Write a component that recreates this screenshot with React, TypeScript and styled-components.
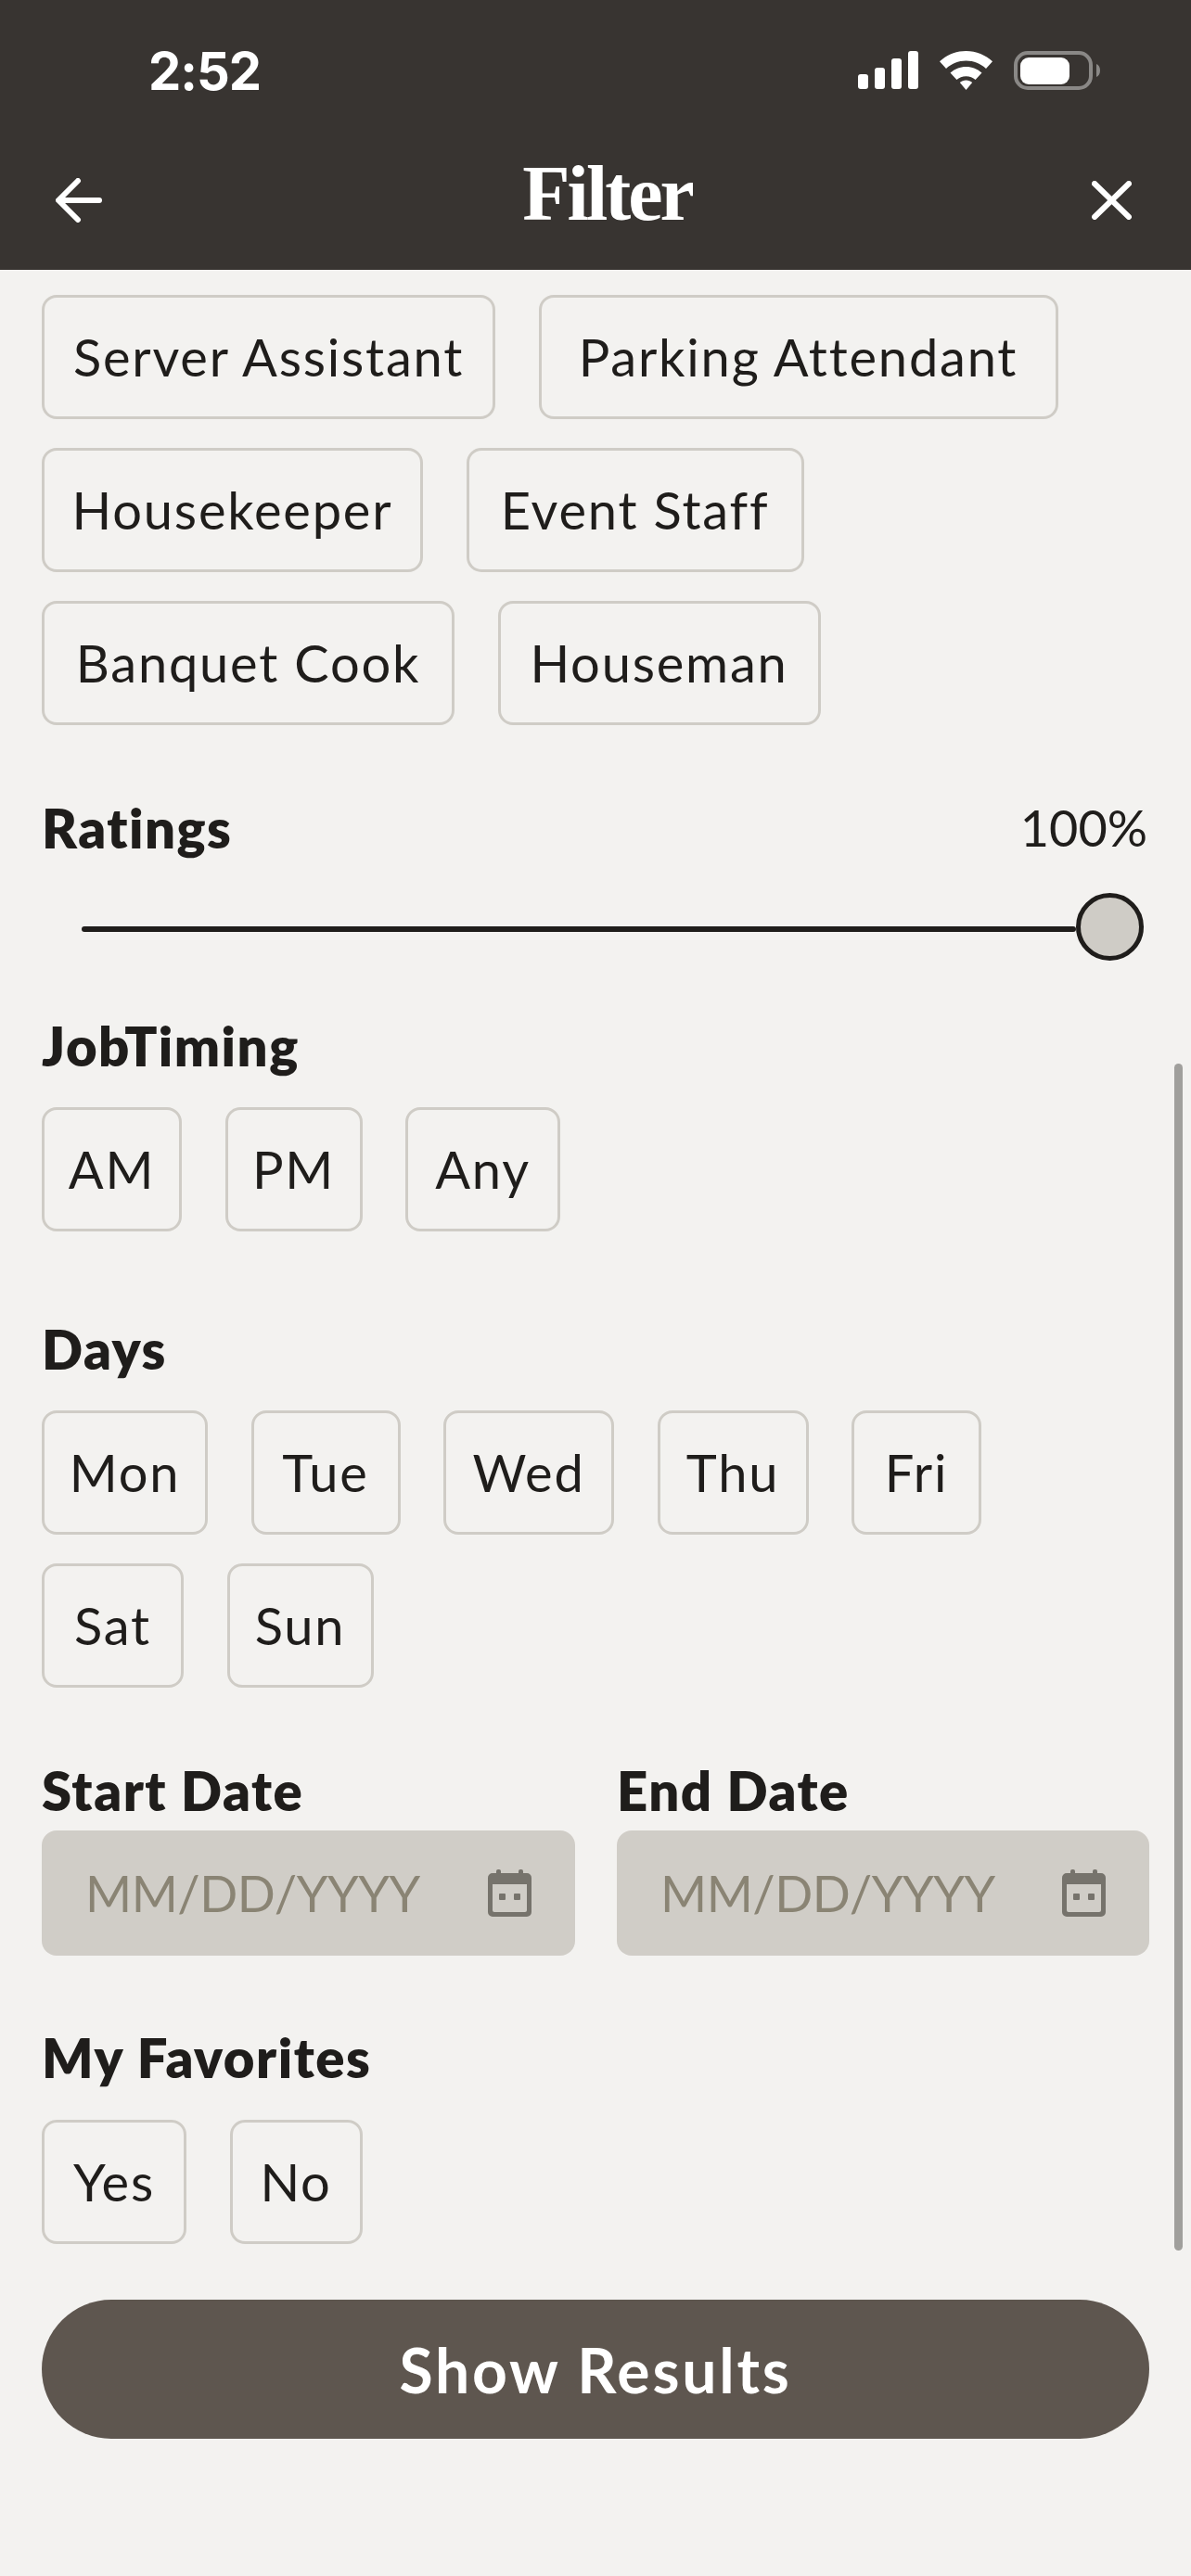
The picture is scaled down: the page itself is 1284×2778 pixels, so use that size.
import React from 'react';
import styled, { createGlobalStyle } from 'styled-components';

const GlobalStyle = createGlobalStyle`
  html, body {
    margin: 0;
    padding: 0;
    background: #f3f2f0;
  }
  * {
    box-sizing: border-box;
  }
`;

const Page = styled.div`
  position: relative;
  width: 1284px;
  height: 2778px;
  overflow: hidden;
  background: #f3f2f0;
  color: #1f1d1b;
  font-family: 'Lato', 'Noto Sans', sans-serif;
`;

const Header = styled.header`
  height: 291px;
  background: #383431;
  color: #fff;
`;

const StatusBar = styled.div`
  display: flex;
  align-items: center;
  justify-content: space-between;
  height: 151px;
  padding: 0 98px 0 160px;
`;

const Clock = styled.span`
  font-family: 'Inter', sans-serif;
  font-size: 56px;
  font-weight: 700;
  letter-spacing: -1px;
  line-height: 1;
  margin-top: 3px;
`;

const StatusIcons = styled.div`
  display: flex;
  align-items: center;
  gap: 23px;
`;

const NavBar = styled.div`
  display: flex;
  align-items: center;
  justify-content: space-between;
  height: 130px;
  padding: 0 64px 0 60px;
`;

const NavButton = styled.button`
  display: flex;
  padding: 0;
  border: 0;
  background: none;
  color: #fff;
`;

const Title = styled.h1`
  margin: 0 0 14px 22px;
  font-family: 'Liberation Serif', serif;
  font-size: 84px;
  font-weight: 700;
  letter-spacing: -3px;
  line-height: 76px;
`;

const Body = styled.main`
  padding: 27px 45px 0;
`;

const ChipGroup = styled.div`
  display: flex;
  flex-wrap: wrap;
  gap: 31px 46.5px;
`;

const Chip = styled.button<{ $width: number }>`
  width: ${(p) => p.$width}px;
  height: 134px;
  padding: 0;
  border: 3px solid #cfccc6;
  border-radius: 16px;
  background: transparent;
  color: #1f1d1b;
  font-family: inherit;
  font-size: 56px;
  letter-spacing: 1.8px;
  line-height: 1;
  white-space: nowrap;
`;

const Section = styled.section<{ $top: number }>`
  margin-top: ${(p) => p.$top}px;
`;

const LabelRow = styled.div`
  display: flex;
  align-items: center;
  justify-content: space-between;
`;

const Label = styled.h2<{ $gap?: number }>`
  margin: 0 0 ${(p) => p.$gap ?? 36}px;
  font-size: 58px;
  font-weight: 800;
  letter-spacing: 1.5px;
  line-height: 60px;
`;

const RatingValue = styled.span`
  font-size: 54px;
  line-height: 60px;
  margin: 0 2px 36px 0;
`;

const SliderRow = styled.div`
  display: flex;
  align-items: center;
  margin-top: 4px;
  padding: 0 6px 0 43px;
`;

const SliderTrack = styled.div`
  flex: 1;
  height: 6px;
  margin-top: 5px;
  border-radius: 3px;
  background: #1f1d1b;
`;

const SliderThumb = styled.div`
  width: 73px;
  height: 73px;
  border: 5px solid #1f1d1b;
  border-radius: 50%;
  background: #cfccc6;
`;

const DateRow = styled.div`
  display: grid;
  grid-template-columns: 575px 574px;
  column-gap: 45px;
`;

const DateField = styled.div`
  display: flex;
  align-items: center;
  justify-content: space-between;
  height: 135px;
  padding: 0 47px 0 47px;
  border-radius: 16px;
  background: #d0cdc7;
  color: #8a8474;
  font-size: 54px;
  letter-spacing: -0.5px;
`;

const ShowResults = styled.button`
  display: block;
  width: 100%;
  height: 150px;
  margin-top: 60px;
  border: 0;
  border-radius: 75px;
  background: #5e564f;
  color: #fff;
  font-family: inherit;
  font-size: 66px;
  font-weight: 700;
  letter-spacing: 2.8px;
`;

const ScrollThumb = styled.div`
  position: absolute;
  top: 1147px;
  right: 9px;
  width: 9px;
  height: 1280px;
  border-radius: 5px;
  background: #a09f9c;
`;

function SignalIcon() {
  return (
    <svg width="65" height="41" viewBox="0 0 65 41" fill="#fff">
      <rect x="0" y="25" width="11" height="16" rx="3" />
      <rect x="18" y="18" width="11" height="23" rx="3" />
      <rect x="36" y="8" width="11" height="33" rx="3" />
      <rect x="54" y="0" width="11" height="41" rx="3" />
    </svg>
  );
}

function WifiIcon() {
  return (
    <svg width="57" height="42" viewBox="0 0 57 42" fill="#fff">
      <path d="M28.5 0C39.5 0 49.5 4.3 57 11.3L50 19C44.4 13.8 36.8 10.6 28.5 10.6S12.6 13.8 7 19L0 11.3C7.5 4.3 17.5 0 28.5 0Z" />
      <path d="M28.5 17C35 17 41 19.5 45.5 23.6L38.6 31C36 28.6 32.4 27.2 28.5 27.2S21 28.6 18.4 31L11.5 23.6C16 19.5 22 17 28.5 17Z" />
      <path d="M28.5 31.5C31 31.5 33.4 32.4 35.2 34L28.5 42L21.8 34C23.6 32.4 26 31.5 28.5 31.5Z" />
    </svg>
  );
}

function BatteryIcon() {
  return (
    <svg width="93" height="42" viewBox="0 0 93 42">
      <rect x="2" y="2" width="81" height="38" rx="13" fill="none" stroke="#8a8886" strokeWidth="4" />
      <rect x="7" y="7" width="53" height="29" rx="9" fill="#fff" />
      <path d="M89 14C91.5 15 93 17.5 93 21S91.5 27 89 28Z" fill="#8a8886" />
    </svg>
  );
}

function BackIcon() {
  return (
    <svg width="50" height="48" viewBox="0 0 50 48" fill="none" stroke="#fff" strokeWidth="6" strokeLinecap="round" strokeLinejoin="round">
      <path d="M47 24H5" />
      <path d="M24 3L3 24l21 21" />
    </svg>
  );
}

function CloseIcon() {
  return (
    <svg width="43" height="42" viewBox="0 0 43 42" fill="none" stroke="#fff" strokeWidth="6" strokeLinecap="round">
      <path d="M3 3l37 36" />
      <path d="M40 3L3 39" />
    </svg>
  );
}

function CalendarIcon() {
  return (
    <svg width="47" height="51" viewBox="0 0 47 51" fill="#76736c">
      <rect x="9" y="0" width="5" height="8" rx="2" />
      <rect x="33" y="0" width="5" height="8" rx="2" />
      <path d="M5 4H42a5 5 0 0 1 5 5V46a5 5 0 0 1-5 5H5a5 5 0 0 1-5-5V9a5 5 0 0 1 5-5ZM5 16V44a2 2 0 0 0 2 2H40a2 2 0 0 0 2-2V16Z" fillRule="evenodd" />
      <rect x="12" y="26" width="7" height="7" rx="1" />
      <rect x="28" y="26" width="7" height="7" rx="1" />
    </svg>
  );
}

const roles: [string, number][] = [
  ['Server Assistant', 489],
  ['Parking Attendant', 560],
  ['Housekeeper', 411],
  ['Event Staff', 364],
  ['Banquet Cook', 445],
  ['Houseman', 348],
];
const timings: [string, number][] = [
  ['AM', 151],
  ['PM', 148],
  ['Any', 167],
];
const days: [string, number][] = [
  ['Mon', 179],
  ['Tue', 161],
  ['Wed', 184],
  ['Thu', 163],
  ['Fri', 140],
  ['Sat', 153],
  ['Sun', 158],
];
const favorites: [string, number][] = [
  ['Yes', 156],
  ['No', 143],
];

function Chips({ items }: { items: [string, number][] }) {
  return (
    <ChipGroup>
      {items.map(([text, width]) => (
        <Chip key={text} $width={width}>
          {text}
        </Chip>
      ))}
    </ChipGroup>
  );
}

export default function App() {
  return (
    <Page>
      <GlobalStyle />
      <Header>
        <StatusBar>
          <Clock>2:52</Clock>
          <StatusIcons>
            <SignalIcon />
            <WifiIcon />
            <BatteryIcon />
          </StatusIcons>
        </StatusBar>
        <NavBar>
          <NavButton aria-label="Back">
            <BackIcon />
          </NavButton>
          <Title>Filter</Title>
          <NavButton aria-label="Close">
            <CloseIcon />
          </NavButton>
        </NavBar>
      </Header>
      <Body>
        <Chips items={roles} />
        <Section $top={81}>
          <LabelRow>
            <Label>Ratings</Label>
            <RatingValue>100%</RatingValue>
          </LabelRow>
          <SliderRow>
            <SliderTrack />
            <SliderThumb />
          </SliderRow>
        </Section>
        <Section $top={62}>
          <Label>JobTiming</Label>
          <Chips items={timings} />
        </Section>
        <Section $top={97}>
          <Label>Days</Label>
          <Chips items={days} />
        </Section>
        <Section $top={81}>
          <DateRow>
            <div>
              <Label $gap={13}>Start Date</Label>
              <DateField>
                MM/DD/YYYY
                <CalendarIcon />
              </DateField>
            </div>
            <div>
              <Label $gap={13}>End Date</Label>
              <DateField>
                MM/DD/YYYY
                <CalendarIcon />
              </DateField>
            </div>
          </DateRow>
        </Section>
        <Section $top={80}>
          <Label $gap={37}>My Favorites</Label>
          <Chips items={favorites} />
        </Section>
        <ShowResults>Show Results</ShowResults>
      </Body>
      <ScrollThumb />
    </Page>
  );
}
